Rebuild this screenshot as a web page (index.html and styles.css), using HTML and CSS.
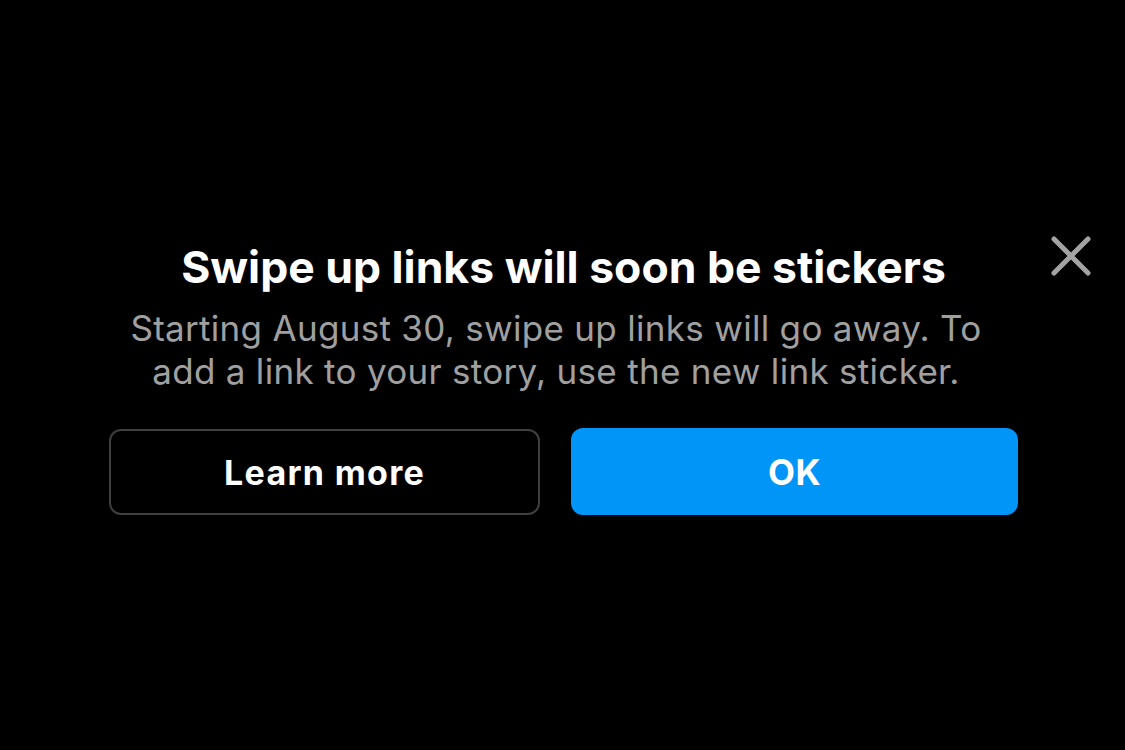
FILE: index.html
```html
<!DOCTYPE html>
<html>
<head>
<meta charset="utf-8">
<link rel="stylesheet" href="styles.css">
</head>
<body>
<div class="sheet">
  <button class="close" aria-label="Close">
    <svg width="40" height="40" viewBox="0 0 40 40"><path d="M3 3 L37 37 M37 3 L3 37" stroke="#a3a3a3" stroke-width="5" stroke-linecap="round" fill="none"/></svg>
  </button>
  <h1 class="title">Swipe up links will soon be stickers</h1>
  <p class="desc">Starting August 30, swipe up links will go away. To<br>add a link to your story, use the new link sticker.</p>
  <div class="actions">
    <button class="btn btn-outline">Learn more</button>
    <button class="btn btn-primary">OK</button>
  </div>
</div>
</body>
</html>
```
FILE: styles.css
```css
html, body {
  margin: 0;
  padding: 0;
  background: #000;
  width: 1125px;
  height: 750px;
  overflow: hidden;
  font-family: Inter, "Liberation Sans", sans-serif;
}
.sheet {
  position: relative;
  display: flex;
  flex-direction: column;
  align-items: center;
  padding-top: 240px;
}
.close {
  position: absolute;
  top: 236px;
  left: 1051px;
  width: 40px;
  height: 40px;
  padding: 0;
  border: 0;
  background: none;
}
.close svg { display: block; }
.title {
  margin: 0;
  color: #fff;
  font-size: 44.5px;
  font-weight: 700;
  line-height: 54px;
  margin-left: 2px;
}
.desc {
  margin: 13px 13px 0 0;
  color: #a0a0a0;
  font-size: 35px;
  font-weight: 400;
  letter-spacing: 0.3px;
  line-height: 43px;
  text-align: center;
}
.actions {
  display: flex;
  gap: 31px;
  margin-top: 36px;
  margin-left: 2px;
}
.btn {
  font-family: Inter, "Liberation Sans", sans-serif;
  font-size: 34px;
  font-weight: 700;
  letter-spacing: 1.3px;
  color: #fff;
  border-radius: 12px;
  height: 86px;
  cursor: pointer;
}
.btn-outline {
  width: 431px;
  background: #000;
  border: 2px solid #3f3f3f;
}
.btn-primary {
  width: 447px;
  background: #0095f6;
  border: 0;
  height: 87px;
  font-size: 35px;
  letter-spacing: 0.4px;
  margin-top: -1px;
}
```
